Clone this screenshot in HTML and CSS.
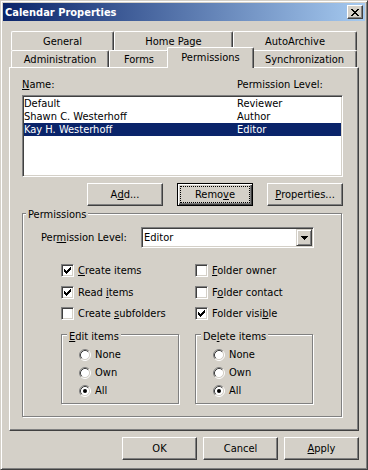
FILE: index.html
```html
<!DOCTYPE html>
<html lang="en">
<head>
    <meta charset="UTF-8">
    <title>Calendar Properties</title>
    <link rel="stylesheet" href="styles.css">
</head>
<body>
    <svg class="sprites" width="0" height="0">
        <symbol id="check" viewBox="0 0 7 7">
            <path d="M0 2h1v3H0zM1 3h1v3H1zM2 4h1v3H2zM3 3h1v3H3zM4 2h1v3H4zM5 1h1v3H5zM6 0h1v3H6z" fill="#000"/>
        </symbol>
        <symbol id="radio" viewBox="0 0 12 12">
            <circle cx="6" cy="6" r="4.5" fill="#fff"/>
            <path d="M2.11 9.89A5.5 5.5 0 0 1 9.89 2.11" stroke="#808080" fill="none"/>
            <path d="M9.89 2.11A5.5 5.5 0 0 1 2.11 9.89" stroke="#fff" fill="none"/>
            <path d="M2.82 9.18A4.5 4.5 0 0 1 9.18 2.82" stroke="#404040" fill="none"/>
            <path d="M9.18 2.82A4.5 4.5 0 0 1 2.82 9.18" stroke="#d4d0c8" fill="none"/>
        </symbol>
        <symbol id="radio-on" viewBox="0 0 12 12">
            <use href="#radio"/>
            <circle cx="6" cy="6" r="2" fill="#000"/>
        </symbol>
    </svg>

    <div class="window">
        <div class="titlebar">
            <span class="title">Calendar Properties</span>
            <span class="close-btn">
                <svg width="8" height="7" viewBox="0 0 8 7" shape-rendering="crispEdges"><path d="M0 0h2v1H0zM6 0h2v1H6zM1 1h2v1H1zM5 1h2v1H5zM2 2h4v1H2zM3 3h2v1H3zM2 4h4v1H2zM1 5h2v1H1zM5 5h2v1H5zM0 6h2v1H0zM6 6h2v1H6z" fill="#000"/></svg>
            </span>
        </div>

        <div class="dialog-body">
            <div class="tabs">
                <div class="tab-row back">
                    <div class="tab tab-general">General</div>
                    <div class="tab tab-home">Home Page</div>
                    <div class="tab tab-archive">AutoArchive</div>
                </div>
                <div class="tab-row front">
                    <div class="tab tab-admin">Administration</div>
                    <div class="tab tab-forms">Forms</div>
                    <div class="tab tab-perms active">Permissions</div>
                    <div class="tab tab-sync">Synchronization</div>
                </div>
            </div>

            <div class="panel">
                <div class="list-head">
                    <span class="col-name"><u>N</u>ame:</span>
                    <span>Permission Level:</span>
                </div>
                <div class="listbox">
                    <div class="list-row"><span class="col-name">Default</span><span>Reviewer</span></div>
                    <div class="list-row"><span class="col-name">Shawn C. Westerhoff</span><span>Author</span></div>
                    <div class="list-row selected"><span class="col-name">Kay H. Westerhoff</span><span>Editor</span></div>
                </div>

                <div class="list-actions">
                    <div class="btn">A<u>d</u>d...</div>
                    <div class="btn default"><span class="focus-ring">Remo<u>v</u>e</span></div>
                    <div class="btn"><u>P</u>roperties...</div>
                </div>

                <div class="group perms">
                    <div class="group-label">Permissions</div>

                    <div class="combo-row">
                        <span class="combo-label">Per<u>m</u>ission Level:</span>
                        <div class="combo">
                            <span class="combo-value">Editor</span>
                            <span class="combo-arrow">
                                <svg width="7" height="4" viewBox="0 0 7 4" shape-rendering="crispEdges"><path d="M0 0h7v1H0zM1 1h5v1H1zM2 2h3v1H2zM3 3h1v1H3z" fill="#000"/></svg>
                            </span>
                        </div>
                    </div>

                    <div class="checks">
                        <div class="check"><span class="checkbox"><svg width="7" height="7"><use href="#check"/></svg></span><span><u>C</u>reate items</span></div>
                        <div class="check"><span class="checkbox"></span><span><u>F</u>older owner</span></div>
                        <div class="check"><span class="checkbox"><svg width="7" height="7"><use href="#check"/></svg></span><span>Read <u>i</u>tems</span></div>
                        <div class="check"><span class="checkbox"></span><span>F<u>o</u>lder contact</span></div>
                        <div class="check"><span class="checkbox"></span><span>Create <u>s</u>ubfolders</span></div>
                        <div class="check"><span class="checkbox"><svg width="7" height="7"><use href="#check"/></svg></span><span>Folder visi<u>b</u>le</span></div>
                    </div>

                    <div class="subgroups">
                        <div class="group sub">
                            <div class="group-label"><u>E</u>dit items</div>
                            <div class="radios">
                                <div class="radio-item"><svg width="12" height="12"><use href="#radio"/></svg><span>None</span></div>
                                <div class="radio-item"><svg width="12" height="12"><use href="#radio"/></svg><span>Own</span></div>
                                <div class="radio-item"><svg width="12" height="12"><use href="#radio-on"/></svg><span>All</span></div>
                            </div>
                        </div>
                        <div class="group sub">
                            <div class="group-label">De<u>l</u>ete items</div>
                            <div class="radios">
                                <div class="radio-item"><svg width="12" height="12"><use href="#radio"/></svg><span>None</span></div>
                                <div class="radio-item"><svg width="12" height="12"><use href="#radio"/></svg><span>Own</span></div>
                                <div class="radio-item"><svg width="12" height="12"><use href="#radio-on"/></svg><span>All</span></div>
                            </div>
                        </div>
                    </div>
                </div>
            </div>

            <div class="dialog-actions">
                <div class="btn">OK</div>
                <div class="btn">Cancel</div>
                <div class="btn"><u>A</u>pply</div>
            </div>
        </div>
    </div>
</body>
</html>
```

FILE: styles.css
```css
* {
    margin: 0;
    padding: 0;
    box-sizing: border-box;
}

body {
    font-family: "DejaVu Sans Condensed", "DejaVu Sans", sans-serif;
    font-stretch: condensed;
    font-size: 11px;
    line-height: 13px;
    color: #000;
    background: #d4d0c8;
}

u {
    text-decoration-skip-ink: none;
}

.sprites {
    position: absolute;
}

.window {
    width: 368px;
    height: 470px;
    padding: 2px;
    background: #d4d0c8;
    border: 1px solid;
    border-color: #d4d0c8 #404040 #404040 #d4d0c8;
    box-shadow: inset 1px 1px #fff, inset -1px -1px #808080;
    display: flex;
    flex-direction: column;
}

.titlebar {
    height: 18px;
    padding: 0 2px;
    display: flex;
    align-items: center;
    justify-content: space-between;
    background: linear-gradient(to right, #0a246a, #a6caf0);
}

.title {
    color: #fff;
    font-weight: bold;
}

.close-btn {
    width: 16px;
    height: 14px;
    display: flex;
    align-items: center;
    justify-content: center;
    background: #d4d0c8;
    border: 1px solid;
    border-color: #fff #404040 #404040 #fff;
    box-shadow: inset -1px -1px #808080;
}

.dialog-body {
    flex: 1;
    padding: 10px 6px 0 6px;
}

/* tabs */
.tabs {
    height: 36px;
    padding-left: 2px;
    display: flex;
    flex-direction: column;
}

.tab-row {
    display: flex;
}

.tab-row.back {
    height: 19px;
}

.tab-row.front {
    height: 17px;
    align-items: flex-end;
}

.tab {
    height: 100%;
    padding-top: 3px;
    text-align: center;
    background: #d4d0c8;
    border-top: 1px solid #fff;
    border-left: 1px solid #fff;
    border-right: 1px solid #404040;
    border-radius: 2px 2px 0 0;
    box-shadow: inset -1px 0 #808080;
}

.tab-row.front .tab {
    padding-top: 2px;
}

.tab-general { width: 103px; }
.tab-home { width: 119px; }
.tab-archive { width: 124px; }
.tab-admin { width: 98px; }
.tab-forms { width: 60px; }
.tab-sync { width: 105px; }

.tab-row.front .tab.active {
    width: 87px;
    height: 21px;
    margin: 0 -2px -1px -2px;
    padding-top: 3px;
    position: relative;
    z-index: 1;
}

/* panel */
.panel {
    height: 364px;
    padding: 10px 0 0 12px;
    border: 1px solid;
    border-color: #fff #404040 #404040 #fff;
    box-shadow: inset -1px -1px #808080;
}

.list-head {
    display: flex;
    height: 13px;
}

.list-head .col-name {
    width: 215px;
}

.listbox {
    width: 321px;
    height: 82px;
    margin-top: 4px;
    padding: 1px;
    background: #fff;
    border: 1px solid;
    border-color: #808080 #fff #fff #808080;
    box-shadow: inset 1px 1px #404040, inset -1px -1px #d4d0c8;
}

.list-row {
    display: flex;
    height: 13px;
    white-space: nowrap;
}

.list-row .col-name {
    width: 213px;
}

.list-row.selected {
    background: #0a246a;
    color: #fff;
}

/* buttons */
.list-actions {
    width: 321px;
    margin-top: 6px;
    display: flex;
    justify-content: flex-end;
    gap: 14px;
}

.btn {
    width: 76px;
    height: 23px;
    display: flex;
    align-items: center;
    justify-content: center;
    background: #d4d0c8;
    border: 1px solid;
    border-color: #fff #404040 #404040 #fff;
    box-shadow: inset -1px -1px #808080;
}

.btn.default {
    padding: 2px;
    border-color: #000;
    box-shadow: inset 1px 1px #fff, inset -1px -1px #404040, inset -2px -2px #808080;
}

.focus-ring {
    flex: 1;
    align-self: stretch;
    display: flex;
    align-items: center;
    justify-content: center;
    border: 1px dotted #000;
}

.dialog-actions {
    margin-top: 6px;
    display: flex;
    justify-content: flex-end;
    gap: 6px;
}

.dialog-actions .btn {
    width: 75px;
}

/* group boxes */
.group {
    border: 1px solid #808080;
    box-shadow: inset 1px 1px #fff, 1px 1px #fff;
}

.group.perms {
    width: 320px;
    height: 204px;
    margin-top: 7px;
}

.group-label {
    display: table;
    margin: -6px 0 0 3px;
    padding: 0 2px;
    background: #d4d0c8;
}

.combo-row {
    height: 21px;
    margin-top: 6px;
    padding-left: 18px;
    display: flex;
    align-items: center;
}

.combo-label {
    width: 100px;
}

.combo {
    width: 173px;
    height: 21px;
    padding: 1px;
    display: flex;
    background: #fff;
    border: 1px solid;
    border-color: #808080 #fff #fff #808080;
    box-shadow: inset 1px 1px #404040, inset -1px -1px #d4d0c8;
}

.combo-value {
    flex: 1;
    padding-left: 1px;
    display: flex;
    align-items: center;
}

.combo-arrow {
    width: 16px;
    height: 17px;
    display: flex;
    align-items: center;
    justify-content: center;
    background: #d4d0c8;
    border: 1px solid;
    border-color: #d4d0c8 #404040 #404040 #d4d0c8;
    box-shadow: inset 1px 1px #fff, inset -1px -1px #808080;
}

.checks {
    margin-top: 16px;
    padding-left: 38px;
    display: grid;
    grid-template-columns: 134px 1fr;
    grid-template-rows: 22px 21px 13px;
}

.check {
    height: 13px;
    display: flex;
    align-items: center;
    gap: 4px;
    white-space: nowrap;
}

.checkbox {
    width: 13px;
    height: 13px;
    display: flex;
    align-items: center;
    justify-content: center;
    background: #fff;
    border: 1px solid;
    border-color: #808080 #fff #fff #808080;
    box-shadow: inset 1px 1px #404040, inset -1px -1px #d4d0c8;
}

.subgroups {
    margin-top: 14px;
    padding-left: 38px;
    display: flex;
    gap: 16px;
}

.group.sub {
    width: 118px;
    height: 70px;
}

.group.sub .group-label {
    margin: -5px 0 0 5px;
}

.radios {
    margin-top: 5px;
    padding-left: 17px;
    display: flex;
    flex-direction: column;
    gap: 5px;
}

.radio-item {
    height: 13px;
    display: flex;
    align-items: center;
    gap: 4px;
}
```
